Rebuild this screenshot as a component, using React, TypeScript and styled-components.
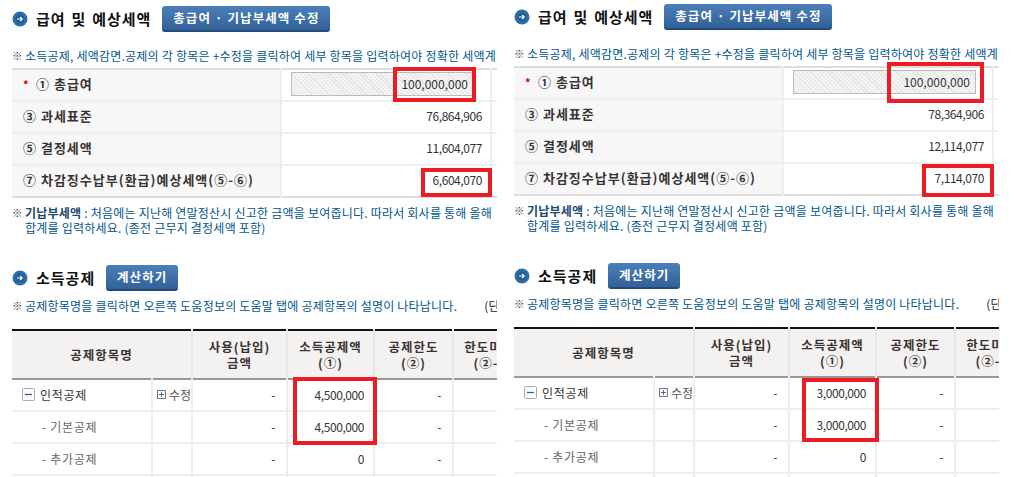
import React from 'react';
import styled, { createGlobalStyle } from 'styled-components';

const FONT = `"Noto Sans CJK KR", "Noto Sans", sans-serif`;

const GlobalStyle = createGlobalStyle`
  html, body {
    margin: 0;
    padding: 0;
    background: #fff;
    height: 477px;
    overflow: hidden;
    font-family: ${FONT};
  }
`;

const Page = styled.div`
  display: flex;
  gap: 17px;
  padding-left: 12px;
  width: 1014px;
  height: 477px;
  box-sizing: border-box;
  overflow: hidden;
`;

const Panel = styled.div<{ $top: number }>`
  position: relative;
  flex: none;
  width: 485px;
  height: 477px;
  padding-top: ${(p) => p.$top}px;
  box-sizing: border-box;
  overflow: hidden;
`;

const Heading = styled.div<{ $mt: number }>`
  display: flex;
  align-items: center;
  height: 26px;
  margin-top: ${(p) => p.$mt}px;
`;

const Bullet = styled.svg`
  flex: none;
  width: 16px;
  height: 16px;
  margin-right: 8px;
`;

const Title = styled.h2`
  margin: 0 11px 0 0;
  font-size: 15px;
  line-height: 26px;
  font-weight: 700;
  letter-spacing: 1px;
  word-spacing: 1.5px;
  color: #111;
  white-space: nowrap;
`;

const ActionButton = styled.button<{ $w: number }>`
  width: ${(p) => p.$w}px;
  height: 26px;
  padding: 0 0 2px;
  border: none;
  border-bottom: 2px solid #234a78;
  border-radius: 3px;
  background: linear-gradient(#4b7fb9, #336199);
  color: #fff;
  font-family: ${FONT};
  font-size: 12.5px;
  font-weight: 700;
  letter-spacing: 1.1px;
  white-space: nowrap;
`;

const Note = styled.div<{ $mt: number }>`
  display: flex;
  margin-top: ${(p) => p.$mt}px;
  font-size: 12px;
  line-height: 15px;
  letter-spacing: 0.22px;
  color: #00568c;
  white-space: nowrap;
`;

const NoteMark = styled.span`
  flex: none;
  width: 13px;
  font-size: 10.5px;
  letter-spacing: 0;
  color: #333;
`;

const NoteStrong = styled.strong`
  font-weight: 700;
  color: #1c4a6e;
`;

const Unit = styled.span`
  margin-left: 27px;
  color: #222;
`;

const Table = styled.table<{ $w: number }>`
  width: ${(p) => p.$w}px;
  table-layout: fixed;
  border-collapse: collapse;
  font-size: 12px;
`;

const SummaryTable = styled(Table)`
  margin-top: 5px;
  border-top: 2px solid #ddd;
  border-bottom: 2px solid #ddd;
`;

const DeductionTable = styled(Table)`
  margin-top: 16px;
  border-top: 2px solid #111;
`;

const SummaryRow = styled.tr`
  height: 32px;
  border-bottom: 2px solid #eee;

  &:last-child {
    border-bottom: none;
  }
`;

const Label = styled.th`
  padding: 0 0 3px 11px;
  background: #f7f7f7;
  border-right: 2px solid #eee;
  text-align: left;
  font-size: 13px;
  font-weight: 700;
  letter-spacing: 1px;
  color: #3a3333;
  white-space: nowrap;
`;

const Star = styled.span`
  display: inline-block;
  width: 13px;
  color: #c00;
  font-size: 11px;
`;

const Amount = styled.td`
  padding: 0 8px 3px 0;
  border-right: 2px solid #eee;
  text-align: right;
  font-size: 12px;
  letter-spacing: -0.42px;
  color: #333;
`;

const HatchInput = styled.div`
  width: 176px;
  height: 22px;
  margin-left: 9px;
  padding-right: 5px;
  border: 1px solid #bbb;
  box-sizing: content-box;
  line-height: 22px;
  text-align: right;
  background: repeating-linear-gradient(45deg, #f5f5f5 0 2px, #e3e3e3 2px 3px);
  font-size: 12px;
  letter-spacing: 0;
  color: #333;
`;

const HeadRow = styled.tr`
  height: 49px;
  border-bottom: 2px solid #999;
`;

const HeadCell = styled.th`
  padding: 0;
  background: #f3f2f0;
  border-right: 2px solid #e8e8e8;
  font-size: 12.5px;
  line-height: 16px;
  font-weight: 700;
  letter-spacing: 1px;
  color: #3a3333;
  white-space: nowrap;
`;

const BodyRow = styled.tr`
  height: 32px;
  border-bottom: 2px solid #eee;
`;

const NameCell = styled.td<{ $sub?: boolean }>`
  padding: 0 0 1px ${(p) => (p.$sub ? 30 : 10)}px;
  border-right: 2px solid #eee;
  font-size: 12px;
  letter-spacing: 0.7px;
  color: ${(p) => (p.$sub ? '#666' : '#333')};
  white-space: nowrap;
`;

const NameInner = styled.span`
  display: flex;
  align-items: center;
  gap: 5px;
`;

const EditCell = styled.td`
  padding: 0 0 1px 4px;
  border-right: 2px solid #eee;
  font-size: 12px;
  color: #555;
  white-space: nowrap;
`;

const EditInner = styled.span`
  display: flex;
  align-items: center;
  gap: 3px;
`;

const NumCell = styled.td<{ $pad: number }>`
  padding: 0 ${(p) => p.$pad}px 1px 0;
  border-right: 2px solid #eee;
  text-align: right;
  font-size: 12px;
  letter-spacing: -0.42px;
  color: #333;
`;

const RedBox = styled.div<{ $x: number; $y: number; $w: number; $h: number }>`
  position: absolute;
  left: ${(p) => p.$x}px;
  top: ${(p) => p.$y}px;
  width: ${(p) => p.$w}px;
  height: ${(p) => p.$h}px;
  border: 4px solid #ed1c24;
  box-sizing: border-box;
`;

const BulletIcon = () => (
  <Bullet viewBox="0 0 16 16">
    <circle cx="8" cy="8" r="7.5" fill="#2a6fa8" />
    <circle cx="8" cy="8" r="4.5" fill="#1f5f98" />
    <path d="M5 8h5M8.2 6l2 2-2 2" fill="none" stroke="#fff" strokeWidth="1.2" />
  </Bullet>
);

const MinusBox = () => (
  <svg width="13" height="13" viewBox="0 0 13 13">
    <rect x="0.5" y="0.5" width="12" height="12" rx="1" fill="#fafafa" stroke="#aaa" />
    <path d="M3 6.5h7" stroke="#2f5f9a" strokeWidth="1.2" />
  </svg>
);

const PlusBox = () => (
  <svg width="9" height="9" viewBox="0 0 9 9">
    <rect x="0.5" y="0.5" width="8" height="8" fill="#fff" stroke="#777" />
    <path d="M2 4.5h5M4.5 2v5" stroke="#2f6fb0" />
  </svg>
);

interface PanelData {
  top: number;
  base: string;
  tax: string;
  due: string;
  deduction: string;
  boxes: { x: number; y: number; w: number; h: number }[];
}

const panels: PanelData[] = [
  {
    top: 2,
    base: '76,864,906',
    tax: '11,604,077',
    due: '6,604,070',
    deduction: '4,500,000',
    boxes: [
      { x: 381, y: 67, w: 83, h: 35 },
      { x: 409, y: 168, w: 71, h: 29 },
      { x: 281, y: 377, w: 84, h: 68 },
    ],
  },
  {
    top: 0,
    base: '78,364,906',
    tax: '12,114,077',
    due: '7,114,070',
    deduction: '3,000,000',
    boxes: [
      { x: 373, y: 62, w: 97, h: 41 },
      { x: 408, y: 164, w: 72, h: 33 },
      { x: 288, y: 378, w: 77, h: 64 },
    ],
  },
];

const SalaryPanel: React.FC<{ data: PanelData }> = ({ data }) => (
  <Panel $top={data.top}>
    <Heading $mt={4}>
      <BulletIcon />
      <Title>급여 및 예상세액</Title>
      <ActionButton $w={168}>총급여 · 기납부세액 수정</ActionButton>
    </Heading>
    <Note $mt={16}>
      <NoteMark>※</NoteMark>
      <span>소득공제, 세액감면.공제의 각 항목은 +수정을 클릭하여 세부 항목을 입력하여야 정확한 세액계</span>
    </Note>
    <SummaryTable $w={485}>
      <colgroup>
        <col width={269} />
        <col width={210} />
        <col width={6} />
      </colgroup>
      <tbody>
        <SummaryRow>
          <Label><Star>*</Star>① 총급여</Label>
          <Amount><HatchInput>100,000,000</HatchInput></Amount>
          <td />
        </SummaryRow>
        <SummaryRow>
          <Label>③ 과세표준</Label>
          <Amount>{data.base}</Amount>
          <td />
        </SummaryRow>
        <SummaryRow>
          <Label>⑤ 결정세액</Label>
          <Amount>{data.tax}</Amount>
          <td />
        </SummaryRow>
        <SummaryRow>
          <Label>⑦ 차감징수납부(환급)예상세액(⑤-⑥)</Label>
          <Amount>{data.due}</Amount>
          <td />
        </SummaryRow>
      </tbody>
    </SummaryTable>
    <Note $mt={7}>
      <NoteMark>※</NoteMark>
      <span>
        <NoteStrong>기납부세액</NoteStrong> : 처음에는 지난해 연말정산시 신고한 금액을 보여줍니다. 따라서 회사를 통해 올해
        <br />
        합계를 입력하세요. (종전 근무지 결정세액 포함)
      </span>
    </Note>
    <Heading $mt={30}>
      <BulletIcon />
      <Title>소득공제</Title>
      <ActionButton $w={72}>계산하기</ActionButton>
    </Heading>
    <Note $mt={7}>
      <NoteMark>※</NoteMark>
      <span>공제항목명을 클릭하면 오른쪽 도움정보의 도움말 탭에 공제항목의 설명이 나타납니다.</span>
      <Unit>(단위:원)</Unit>
    </Note>
    <DeductionTable $w={526}>
      <colgroup>
        <col width={140} />
        <col width={40} />
        <col width={95} />
        <col width={87} />
        <col width={79} />
        <col width={85} />
      </colgroup>
      <thead>
        <HeadRow>
          <HeadCell colSpan={2}>공제항목명</HeadCell>
          <HeadCell>사용(납입)<br />금액</HeadCell>
          <HeadCell>소득공제액<br />(①)</HeadCell>
          <HeadCell>공제한도<br />(②)</HeadCell>
          <HeadCell>한도미달액<br />(②-①)</HeadCell>
        </HeadRow>
      </thead>
      <tbody>
        <BodyRow>
          <NameCell><NameInner><MinusBox />인적공제</NameInner></NameCell>
          <EditCell><EditInner><PlusBox />수정</EditInner></EditCell>
          <NumCell $pad={11}>-</NumCell>
          <NumCell $pad={9}>{data.deduction}</NumCell>
          <NumCell $pad={11}>-</NumCell>
          <NumCell $pad={11} />
        </BodyRow>
        <BodyRow>
          <NameCell $sub>- 기본공제</NameCell>
          <EditCell />
          <NumCell $pad={11}>-</NumCell>
          <NumCell $pad={9}>{data.deduction}</NumCell>
          <NumCell $pad={11}>-</NumCell>
          <NumCell $pad={11} />
        </BodyRow>
        <BodyRow>
          <NameCell $sub>- 추가공제</NameCell>
          <EditCell />
          <NumCell $pad={11}>-</NumCell>
          <NumCell $pad={9}>0</NumCell>
          <NumCell $pad={11}>-</NumCell>
          <NumCell $pad={11} />
        </BodyRow>
        <BodyRow>
          <NameCell />
          <EditCell />
          <NumCell $pad={11} />
          <NumCell $pad={9} />
          <NumCell $pad={11} />
          <NumCell $pad={11} />
        </BodyRow>
      </tbody>
    </DeductionTable>
    {data.boxes.map((b) => (
      <RedBox key={`${b.x}-${b.y}`} $x={b.x} $y={b.y} $w={b.w} $h={b.h} />
    ))}
  </Panel>
);

export default function App() {
  return (
    <>
      <GlobalStyle />
      <Page>
        {panels.map((p) => (
          <SalaryPanel key={p.base} data={p} />
        ))}
      </Page>
    </>
  );
}
